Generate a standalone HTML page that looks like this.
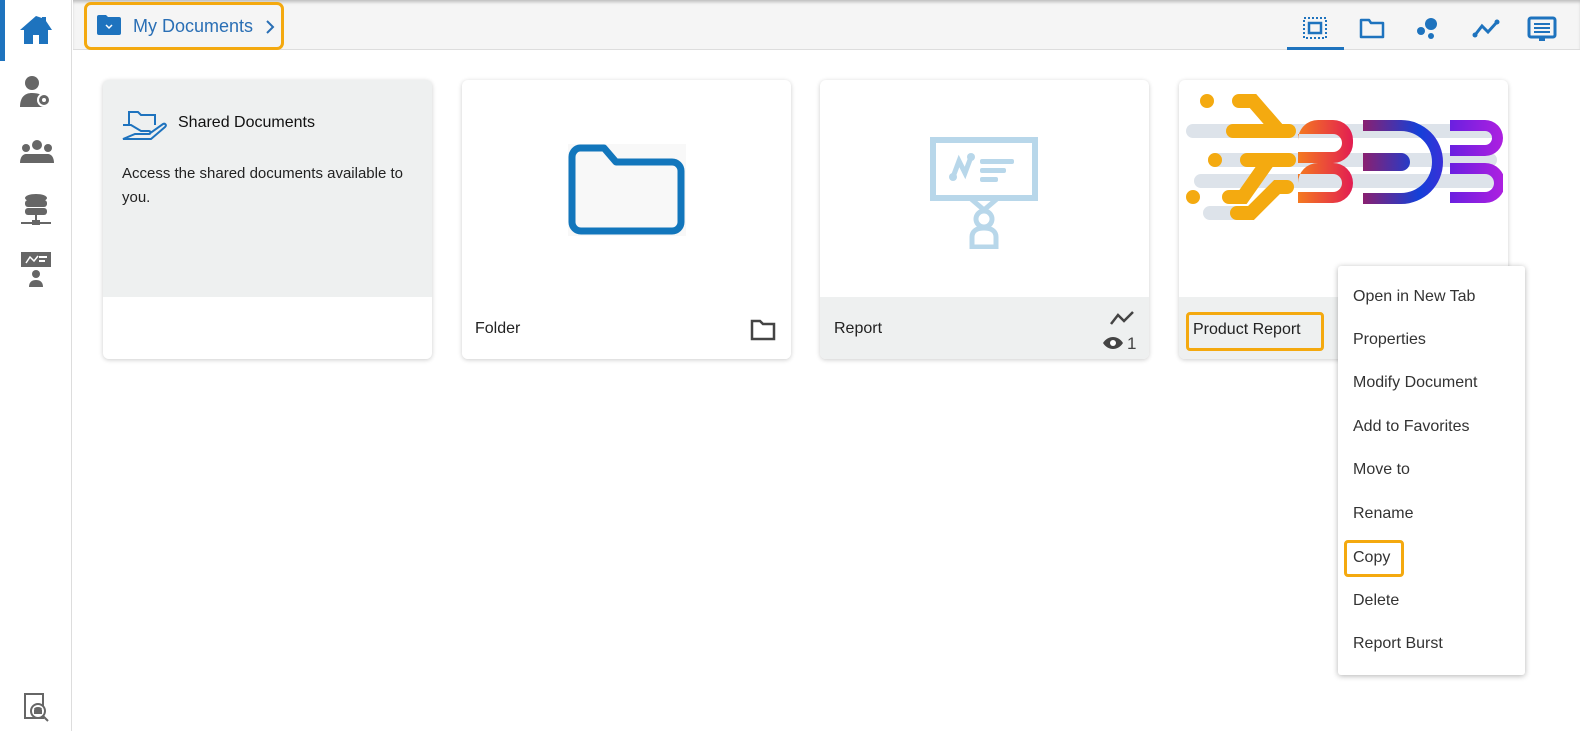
<!DOCTYPE html>
<html><head><meta charset="utf-8"><style>
*{box-sizing:border-box;margin:0;padding:0}
body{width:1580px;height:731px;overflow:hidden;background:#fff;font-family:"Liberation Sans",sans-serif;position:relative;color:#222}
.side{position:absolute;left:0;top:0;width:72px;height:731px;background:#fff;border-right:1px solid #ddd}
.act{position:absolute;left:0;top:0;width:5px;height:61px;background:#1e73be}
.top{position:absolute;left:73px;top:0;right:0;height:50px;background:#f5f5f5;border-bottom:1px solid #ddd;box-shadow:inset 0 3px 3px -1px #bbb}
.bc{position:absolute;left:84px;top:2px;width:200px;height:48px;border:3px solid #f4a90f;border-radius:7px}
.card{position:absolute;top:80px;width:329px;height:279px;border-radius:6px;box-shadow:0 1px 5px rgba(0,0,0,.2);overflow:hidden;background:#fff}
.card .bot{position:absolute;left:0;right:0;top:217px;bottom:0;background:#eef0f0;font-size:16px}
.menu{position:absolute;left:1338px;top:266px;width:187px;height:409px;background:#fff;box-shadow:0 1px 6px rgba(0,0,0,.3);border-radius:3px}
.menu div{position:absolute;left:15px;font-size:16px;color:#333}
.hl{border:3px solid #f4a90f;border-radius:4px;position:absolute}
</style></head><body>
<div class="side"><div class="act"></div>
<svg style="position:absolute;left:18px;top:14px" width="36" height="32" viewBox="0 0 36 32"><path d="M18 2L2 16h4v14h9v-9h6v9h9V16h4L28 7V3h-4v1z" fill="#1e73be"/></svg>
<svg style="position:absolute;left:19px;top:74px" width="34" height="34" viewBox="0 0 34 34"><circle cx="13" cy="9" r="7" fill="#666"/><path d="M1 33c0-10 5-14 12-14s10 2 12 5v9z" fill="#666"/><circle cx="25" cy="26" r="6" fill="#666" stroke="#fff" stroke-width="2"/><circle cx="25" cy="26" r="2" fill="#fff"/></svg>
<svg style="position:absolute;left:19px;top:140px" width="36" height="24" viewBox="0 0 36 24"><circle cx="18" cy="5" r="5" fill="#666"/><circle cx="7" cy="8" r="4" fill="#666"/><circle cx="29" cy="8" r="4" fill="#666"/><path d="M1 23c0-6 3-9 6-9h22c3 0 6 3 6 9z" fill="#666"/></svg>
<svg style="position:absolute;left:20px;top:194px" width="32" height="36" viewBox="0 0 32 36"><ellipse cx="16" cy="4" rx="11" ry="4" fill="#666"/><rect x="5" y="6" width="22" height="7" rx="3" fill="#666"/><rect x="5" y="14" width="22" height="7" rx="3" fill="#666"/><rect x="15" y="21" width="2" height="8" fill="#666"/><rect x="1" y="28" width="30" height="2" fill="#666"/><rect x="12" y="26" width="8" height="5" fill="#666"/></svg>
<svg style="position:absolute;left:21px;top:252px" width="30" height="36" viewBox="0 0 30 36"><rect x="0" y="0" width="30" height="15" fill="#666"/><path d="M5 11l4-6 4 4 4-5" stroke="#fff" stroke-width="1.5" fill="none"/><rect x="18" y="4" width="8" height="2" fill="#fff"/><rect x="18" y="8" width="6" height="2" fill="#fff"/><circle cx="15" cy="22" r="4" fill="#666"/><path d="M8 35c0-5 3-7 7-7s7 2 7 7z" fill="#666"/></svg>
<svg style="position:absolute;left:21px;top:693px" width="30" height="30" viewBox="0 0 30 30"><rect x="4" y="1" width="18" height="24" fill="none" stroke="#666" stroke-width="2"/><circle cx="17" cy="18" r="7" fill="#fff" stroke="#666" stroke-width="2"/><ellipse cx="17" cy="16" rx="4" ry="2" fill="#666"/><rect x="13" y="17" width="8" height="4" fill="#666"/><path d="M22 23l5 5" stroke="#666" stroke-width="2"/></svg>
</div>
<div class="top"></div>
<div class="bc"></div>
<svg style="position:absolute;left:97px;top:15px" width="24" height="20" viewBox="0 0 24 20"><path d="M0 2a2 2 0 012-2h7l2 2h11a2 2 0 012 2v14a2 2 0 01-2 2H2a2 2 0 01-2-2z" fill="#1e73be"/><path d="M9 10l3 3 3-3" stroke="#fff" stroke-width="1.5" fill="none"/></svg>
<div style="position:absolute;left:133px;top:16px;font-size:18px;color:#2a6fb5">My Documents</div>
<svg style="position:absolute;left:265px;top:20px" width="10" height="14" viewBox="0 0 10 14"><path d="M2 1l6 6-6 6" stroke="#2a6fb5" stroke-width="2" fill="none"/></svg>
<div style="position:absolute;left:1287px;top:47px;width:57px;height:3px;background:#1e73be"></div>
<svg style="position:absolute;left:1303px;top:17px" width="24" height="22" viewBox="0 0 24 22"><rect x="1" y="1" width="22" height="20" fill="none" stroke="#1e73be" stroke-width="2" stroke-dasharray="2 2"/><rect x="6" y="6" width="12" height="10" fill="none" stroke="#1e73be" stroke-width="2.5"/></svg>
<svg style="position:absolute;left:1359px;top:17px" width="26" height="22" viewBox="0 0 26 22"><path d="M2 3h8l2 3h12v14H2z" fill="none" stroke="#1e73be" stroke-width="2.5" stroke-linejoin="round"/></svg>
<svg style="position:absolute;left:1416px;top:16px" width="24" height="24" viewBox="0 0 24 24"><circle cx="15" cy="8" r="6" fill="#1e73be"/><circle cx="5" cy="15" r="4" fill="#1e73be"/><circle cx="15" cy="20" r="3" fill="#1e73be"/></svg>
<svg style="position:absolute;left:1472px;top:18px" width="28" height="20" viewBox="0 0 28 20"><path d="M3 17l7-9 6 6 9-10" stroke="#1e73be" stroke-width="3" fill="none"/><circle cx="3" cy="17" r="2.5" fill="#1e73be"/><circle cx="25" cy="4" r="2.5" fill="#1e73be"/></svg>
<svg style="position:absolute;left:1527px;top:16px" width="30" height="26" viewBox="0 0 30 26"><rect x="2" y="2" width="26" height="19" rx="2" fill="none" stroke="#1e73be" stroke-width="3"/><rect x="7" y="7" width="16" height="2" fill="#1e73be"/><rect x="7" y="11" width="16" height="2" fill="#1e73be"/><rect x="7" y="15" width="16" height="2" fill="#1e73be"/><rect x="12" y="21" width="6" height="4" fill="#1e73be"/></svg>

<div class="card" style="left:103px;background:#eef0f0"><div style="position:absolute;left:0;right:0;top:217px;bottom:0;background:#fff"></div>
<svg style="position:absolute;left:18px;top:28px" width="46" height="34" viewBox="0 0 46 34"><path d="M8 16V4h9l3 3h14v10" fill="none" stroke="#1e73be" stroke-width="2"/><path d="M2 17h8l10 6h8c2 0 2 3 0 3h-9M14 26h14l14-10c2-1 4 1 2 3L30 31H2z" fill="none" stroke="#1e73be" stroke-width="2"/></svg>
<div style="position:absolute;left:75px;top:34px;font-size:16px;color:#111">Shared Documents</div>
<div style="position:absolute;left:19px;top:82px;font-size:15px;line-height:24px;color:#222;width:290px">Access the shared documents available to you.</div>
</div>
<div class="card" style="left:462px"><div class="bot" style="background:#fff"><div style="position:absolute;left:13px;top:23px">Folder</div>
<svg style="position:absolute;left:288px;top:22px" width="26" height="22" viewBox="0 0 26 22"><path d="M2 2h8l3 3h11v15H2z" fill="none" stroke="#444" stroke-width="2.5"/></svg></div>
<svg style="position:absolute;left:106px;top:64px" width="118" height="92" viewBox="0 0 118 92"><rect width="118" height="92" fill="#f8f8f8"/><path d="M12 4h24l12 14h56c5 0 9 4 9 9v51c0 5-4 9-9 9H13c-5 0-9-4-9-9V13c0-5 4-9 8-9z" fill="#f8f8f8" stroke="#1276bc" stroke-width="7" stroke-linejoin="round"/></svg>
</div>
<div class="card" style="left:820px"><div class="bot"><div style="position:absolute;left:14px;top:23px">Report</div>
<svg style="position:absolute;left:288px;top:12px" width="30" height="18" viewBox="0 0 30 18"><path d="M3 15l7-9 6 6 9-9" stroke="#444" stroke-width="2.5" fill="none"/></svg>
<svg style="position:absolute;left:282px;top:38px" width="22" height="16" viewBox="0 0 22 16"><path d="M1 8c5-8 15-8 20 0-5 8-15 8-20 0z" fill="#444"/><circle cx="11" cy="8" r="3" fill="#fff"/></svg>
<div style="position:absolute;left:307px;top:37px;font-size:17px;color:#444">1</div></div>
<svg style="position:absolute;left:110px;top:57px" width="108" height="112" viewBox="0 0 108 112"><rect x="3" y="3" width="102" height="58" fill="none" stroke="#b8d7ea" stroke-width="6"/><path d="M40 61l14 12 14-12" fill="none" stroke="#b8d7ea" stroke-width="5"/><circle cx="54" cy="82" r="8" fill="none" stroke="#b8d7ea" stroke-width="5"/><path d="M42 110V100c0-6 5-9 12-9s12 3 12 9v10z" fill="none" stroke="#b8d7ea" stroke-width="5"/><path d="M23 40l6-16 6 12 6-16" fill="none" stroke="#b8d7ea" stroke-width="5" stroke-linecap="round"/><circle cx="23" cy="40" r="4" fill="#b8d7ea"/><circle cx="41" cy="20" r="4" fill="#b8d7ea"/><rect x="50" y="22" width="34" height="5" rx="2" fill="#b8d7ea"/><rect x="50" y="31" width="26" height="5" rx="2" fill="#b8d7ea"/><rect x="50" y="40" width="18" height="5" rx="2" fill="#b8d7ea"/></svg>
</div>
<div class="card" style="left:1179px"><div class="bot"></div>
<svg style="position:absolute;left:6px;top:5px" width="318" height="150" viewBox="0 0 318 150"><defs>
<linearGradient id="a" x1="0" x2="1"><stop offset="0" stop-color="#f47a20"/><stop offset="1" stop-color="#e21d52"/></linearGradient>
<linearGradient id="b" x1="0" x2="1"><stop offset="0" stop-color="#8a2070"/><stop offset=".7" stop-color="#1440d8"/><stop offset="1" stop-color="#3a30d8"/></linearGradient>
<linearGradient id="c" x1="0" x2="1"><stop offset="0" stop-color="#6a20e0"/><stop offset="1" stop-color="#b020e0"/></linearGradient></defs>
<rect width="318" height="150" fill="#fff"/>
<g stroke="#dde3ea" stroke-width="14" stroke-linecap="round"><path d="M8 46h300M30 75h275M16 96h290M25 128h30"/></g>
<g stroke="#f4aa10" stroke-width="14" stroke-linecap="round" fill="none"><path d="M22 16h0M54 16h14l26 30h10M48 46h56M30 75h0M62 75h42M8 112h0M44 112h14l26-37h20M52 128h14l26-26h10"/></g>
<path d="M113 55a20 20 0 0120-20h15a20 20 0 0120 20v3a20 20 0 01-20 20h-35v-11h35a9 9 0 000-18h-35z" fill="url(#a)"/>
<path d="M113 98a20 20 0 0120-20h15a20 20 0 0120 20v0a20 20 0 01-20 20h-35v-11h35a9 9 0 000-18h-35z" fill="url(#a)"/>
<path d="M178 35h38a42 42 0 010 84h-38v-11h38a31 31 0 000-62h-38zM178 68h38a9 9 0 010 18h-38z" fill="url(#b)"/>
<path d="M265 35h35a18 18 0 010 36h-35v-11h35a7 7 0 000-14h-35zM265 78h35a20 20 0 010 40h-35v-11h35a9 9 0 000-18h-35z" fill="url(#c)"/>
</svg>
<div class="hl" style="left:7px;top:232px;width:138px;height:39px"></div>
<div style="position:absolute;left:14px;top:241px;font-size:16px">Product Report</div>
</div>
<div class="menu">
<div style="top:22px">Open in New Tab</div>
<div style="top:65px">Properties</div>
<div style="top:108px">Modify Document</div>
<div style="top:152px">Add to Favorites</div>
<div style="top:195px">Move to</div>
<div style="top:239px">Rename</div>
<div style="top:283px">Copy</div>
<div style="top:326px">Delete</div>
<div style="top:369px">Report Burst</div>
</div>
<div class="hl" style="left:1344px;top:540px;width:60px;height:37px"></div>
</body></html>
